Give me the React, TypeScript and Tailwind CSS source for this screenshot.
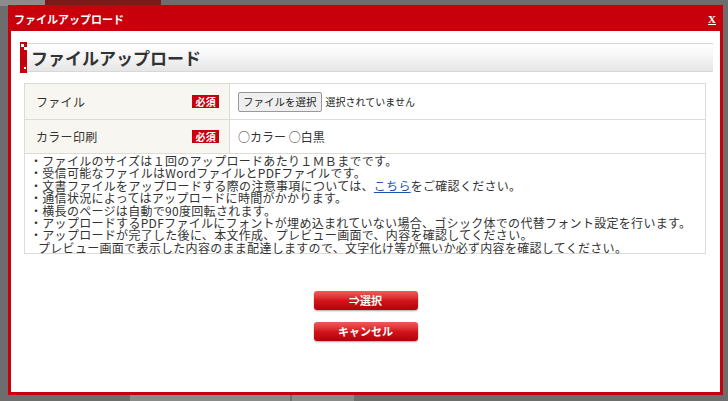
const notes = [
  "・ファイルのサイズは１回のアップロードあたり１ＭＢまでです。",
  "・受信可能なファイルはWordファイルとPDFファイルです。",
  "LINK",
  "・通信状況によってはアップロードに時間がかかります。",
  "・横長のページは自動で90度回転されます。",
  "・アップロードするPDFファイルにフォントが埋め込まれていない場合、ゴシック体での代替フォント設定を行います。",
  "・アップロードが完了した後に、本文作成、プレビュー画面で、内容を確認してください。",
];

const Required = () => (
  <span className="bg-[#c8000b] text-white text-[10px] leading-[13px] px-[3px] font-bold">
    必須
  </span>
);

const RedButton = ({ label }: { label: string }) => (
  <button className="w-[104px] h-[19px] rounded-[3px] bg-gradient-to-b from-[#ef5a5a] via-[#d3141b] to-[#b5000a] text-white text-[11px] font-bold leading-[19px] shadow-[0_1px_2px_rgba(0,0,0,0.35)]">
    {label}
  </button>
);

export default function App() {
  return (
    <div
      className="w-[728px] h-[401px] bg-[#6d6d6d] overflow-hidden relative"
      style={{ fontFamily: '"Noto Sans CJK JP", "Noto Sans", sans-serif' }}
    >
      {/* background bits peeking out */}
      <div className="absolute left-0 top-0 w-[45px] h-[6px] bg-[#8c8c8c]" />
      <div className="absolute left-[45px] top-0 w-[116px] h-[6px] bg-[#7a1b1b]" />
      <div className="absolute left-[130px] top-[395px] w-[160px] h-[6px] bg-[#8a8a8a]" />
      <div className="absolute left-[292px] top-[395px] w-[62px] h-[6px] bg-[#8a8a8a]" />

      <div className="absolute left-[8px] top-[5px] w-[715px] h-[390px] bg-[#c8000b] p-[3px] flex flex-col">
        <div className="h-[23px] flex items-center justify-between px-[3px] text-white">
          <span className="text-[11px] font-bold">ファイルアップロード</span>
          <span className="text-[11px] font-bold underline pr-[1px]" style={{ fontFamily: '"Liberation Serif", serif' }}>
            X
          </span>
        </div>
        <div className="flex-1 bg-white pt-[12px] px-[13px]">
          <div className="relative h-[29px] -ml-[4px] mr-[-6px] flex items-center border-t border-b border-[#d8d8d8] bg-gradient-to-b from-[#ffffff] via-[#f4f4f4] to-[#e6e6e6]">
            <div className="absolute left-0 -top-[2px] w-[7px] h-[31px] bg-[#c8000b]">
              <div className="absolute left-[1px] top-[2px] w-[3px] h-[3px] bg-white" />
              <div className="absolute left-[4px] top-[5px] w-[3px] h-[3px] bg-white" />
              <div className="absolute left-[4px] top-[25px] w-[2px] h-[2px] bg-white" />
            </div>
            <span className="pl-[11px] text-[17px] font-bold text-[#333]">ファイルアップロード</span>
          </div>

          <div className="mt-[11px] w-[682px] border border-[#dcdcd6] text-[#333]">
            <div className="flex h-[36px] border-b border-[#dcdcd6]">
              <div className="w-[205px] bg-[#f7f6f0] border-r border-[#dcdcd6] flex items-center justify-between pl-[11px] pr-[10px] text-[12px] tracking-[0.3px]">
                <span>ファイル</span>
                <Required />
              </div>
              <div className="flex items-center pl-[8px]">
                <span className="border border-[#999] rounded-[2px] bg-[#efefef] px-[4px] h-[20px] leading-[18px] text-[10.5px] text-[#222]">
                  ファイルを選択
                </span>
                <span className="ml-[4px] text-[#222] text-[10px]">選択されていません</span>
              </div>
            </div>
            <div className="flex h-[34px] border-b border-[#dcdcd6]">
              <div className="w-[205px] bg-[#f7f6f0] border-r border-[#dcdcd6] flex items-center justify-between pl-[11px] pr-[10px] text-[12px] tracking-[0.3px]">
                <span>カラー印刷</span>
                <Required />
              </div>
              <div className="flex items-center pl-[8px] text-[12px]">
                <span>○カラー ○白黒</span>
              </div>
            </div>
            <div className="pl-[5px] pt-[1px] pb-[1px] text-[12px] leading-[12.4px] tracking-[0.3px] text-[#333] h-[99px]">
              {notes.map((n, i) =>
                i === 2 ? (
                  <div key={i} className="whitespace-nowrap">
                    ・文書ファイルをアップロードする際の注意事項については、
                    <span className="text-[#1a55b5] underline">こちら</span>をご確認ください。
                  </div>
                ) : (
                  <div key={i} className="whitespace-nowrap">{n}</div>
                )
              )}
              <div className="whitespace-nowrap pl-[8px]">
                プレビュー画面で表示した内容のまま配達しますので、文字化け等が無いか必ず内容を確認してください。
              </div>
            </div>
          </div>

          <div className="flex flex-col items-center gap-[12px] mt-[37px]">
            <RedButton label="⇒選択" />
            <RedButton label="キャンセル" />
          </div>
        </div>
      </div>
    </div>
  );
}
